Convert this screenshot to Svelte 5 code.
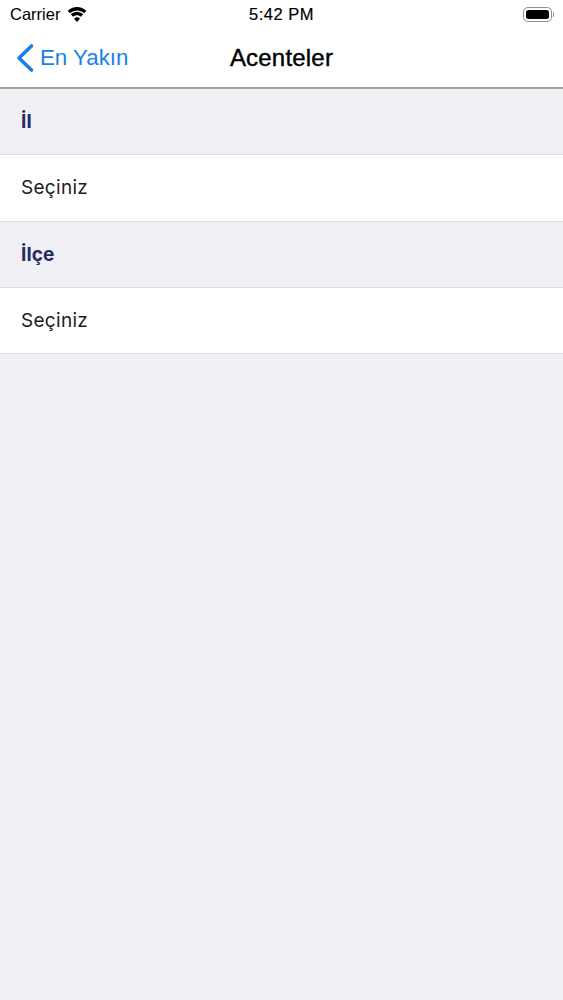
<script>
  const sections = [
    { title: 'İl', value: 'Seçiniz' },
    { title: 'İlçe', value: 'Seçiniz' }
  ];
</script>

<div class="page">
  <header class="top">
    <div class="status">
      <div class="status-left">
        <span class="carrier">Carrier</span>
        <svg class="wifi" width="20" height="15" viewBox="2.500 1.300 16 13">
          <path d="M10.500 4.400c2.400 0 4.500.9 6.100 2.400l2-2.200A11.600 11.600 0 0 0 10.500 1.300 11.600 11.600 0 0 0 2.400 4.600l2 2.200a8.900 8.900 0 0 1 6.100-2.400z" fill="#000"/>
          <path d="M10.500 8.500c1.300 0 2.500.5 3.400 1.300l2-2.200a7.800 7.800 0 0 0-10.800 0l2 2.200c.9-.8 2.100-1.300 3.400-1.300z" fill="#000"/>
          <path d="M10.500 14.300l2.600-2.900a3.600 3.600 0 0 0-5.200 0z" fill="#000"/>
        </svg>
      </div>
      <span class="time">5:42 PM</span>
      <div class="battery"><div class="battery-fill"></div></div>
    </div>
    <nav class="nav">
      <div class="back">
        <svg width="20" height="30" viewBox="0 0 20 30">
          <path d="M16.500 3 L4 15 L16.500 27" fill="none" stroke="#1a7fe8" stroke-width="3.600" stroke-linecap="round" stroke-linejoin="round"/>
        </svg>
        <span>En Yakın</span>
      </div>
      <h1>Acenteler</h1>
    </nav>
  </header>

  {#each sections as section}
    <div class="section-head">{section.title}</div>
    <div class="row">{section.value}</div>
  {/each}
</div>

<style>
  :global(body) {
    margin: 0;
    background: #efeff4;
  }

  .page {
    min-height: 1000px;
    background: #efeff4;
    font-family: "Liberation Sans", Arial, sans-serif;
  }

  .top {
    background: #fff;
    border-bottom: 2px solid #a3a3a5;
  }

  .status {
    position: relative;
    height: 29px;
    display: flex;
    align-items: center;
    justify-content: space-between;
    padding: 0 11px 0 10px;
    color: #000;
  }

  .status-left {
    display: flex;
    align-items: center;
    gap: 7px;
  }

  .carrier {
    font-size: 16.500px;
  }

  .wifi {
    margin-top: -1px;
  }

  .time {
    position: absolute;
    left: 0;
    right: 0;
    text-align: center;
    font-size: 16.500px;
    letter-spacing: 0.500px;
    -webkit-text-stroke: 0.200px #000;
  }

  .battery {
    position: relative;
    width: 29px;
    height: 15px;
    padding: 2px;
    box-sizing: border-box;
    border: 1px solid #8e8e8e;
    border-radius: 5px;
  }

  .battery::after {
    content: "";
    position: absolute;
    right: -3px;
    top: 4px;
    width: 1.500px;
    height: 5px;
    background: #9a9a9a;
  }

  .battery-fill {
    height: 100%;
    background: #000;
    border-radius: 2.500px;
  }

  .nav {
    position: relative;
    height: 57px;
    padding-bottom: 1px;
    display: flex;
    align-items: center;
    justify-content: center;
  }

  .nav h1 {
    margin: 0;
    font-size: 24px;
    font-weight: 500;
    letter-spacing: 0.200px;
    color: #000;
    -webkit-text-stroke: 0.400px #000;
  }

  .back {
    position: absolute;
    left: 15px;
    top: 0;
    bottom: 1px;
    display: flex;
    align-items: center;
    gap: 5px;
    color: #1a7fe8;
    font-size: 22.300px;
  }

  .section-head {
    height: 66.250px;
    box-sizing: border-box;
    display: flex;
    align-items: center;
    padding-left: 21px;
    font-family: "Inter", "Open Sans", sans-serif;
    font-size: 19px;
    font-weight: 700;
    letter-spacing: 0.100px;
    color: #252c65;
    border-bottom: 1px solid #dcdcdf;
  }

  .row {
    height: 66.250px;
    box-sizing: border-box;
    display: flex;
    align-items: center;
    padding-left: 21px;
    background: #fff;
    font-family: "Inter", "Open Sans", sans-serif;
    font-size: 19px;
    letter-spacing: 0.300px;
    color: #1c1c1c;
    border-bottom: 1px solid #dcdcdf;
  }
</style>
